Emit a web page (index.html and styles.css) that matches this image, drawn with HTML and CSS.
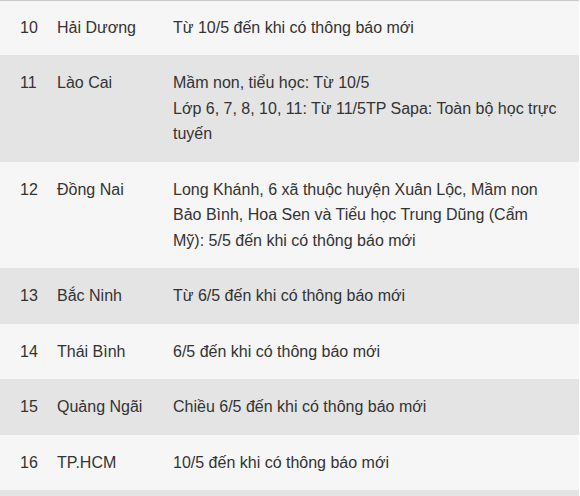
FILE: index.html
```html
<!DOCTYPE html>
<html lang="vi">
<head>
<meta charset="utf-8">
<link rel="stylesheet" href="styles.css">
</head>
<body>
<div class="table">
  <div class="row light first">
    <div class="num">10</div>
    <div class="name">Hải Dương</div>
    <div class="desc">Từ 10/5 đến khi có thông báo mới</div>
  </div>
  <div class="row dark">
    <div class="num">11</div>
    <div class="name">Lào Cai</div>
    <div class="desc">Mầm non, tiểu học: Từ 10/5<br>Lớp 6, 7, 8, 10, 11: Từ 11/5TP Sapa: Toàn bộ học trực tuyến</div>
  </div>
  <div class="row light">
    <div class="num">12</div>
    <div class="name">Đồng Nai</div>
    <div class="desc">Long Khánh, 6 xã thuộc huyện Xuân Lộc, Mầm non Bảo Bình, Hoa Sen và Tiểu học Trung Dũng (Cẩm Mỹ): 5/5 đến khi có thông báo mới</div>
  </div>
  <div class="row dark">
    <div class="num">13</div>
    <div class="name">Bắc Ninh</div>
    <div class="desc">Từ 6/5 đến khi có thông báo mới</div>
  </div>
  <div class="row light">
    <div class="num">14</div>
    <div class="name">Thái Bình</div>
    <div class="desc">6/5 đến khi có thông báo mới</div>
  </div>
  <div class="row dark">
    <div class="num">15</div>
    <div class="name">Quảng Ngãi</div>
    <div class="desc">Chiều 6/5 đến khi có thông báo mới</div>
  </div>
  <div class="row light">
    <div class="num">16</div>
    <div class="name">TP.HCM</div>
    <div class="desc">10/5 đến khi có thông báo mới</div>
  </div>
  <div class="row dark tail"></div>
</div>
</body>
</html>
```

FILE: styles.css
```css
html, body {
  margin: 0;
  padding: 0;
  background: #ffffff;
}

body {
  font-family: Arial, "Liberation Sans", sans-serif;
  font-size: 16px;
  line-height: 25.5px;
  color: #333333;
  overflow: hidden;
}

.table {
  width: 579px;
  border-top: 1px solid #c9c9c9;
}

.row {
  display: grid;
  grid-template-columns: 57px 116px 1fr;
}

.row > div {
  padding: 15px 0;
}

.row.first > div {
  padding-top: 13.5px;
}

.light {
  background: #f6f6f6;
}

.dark {
  background: #e4e4e4;
}

.num {
  padding-left: 20px !important;
}

.desc {
  padding-right: 18px !important;
}

.tail {
  height: 20px;
}
```
